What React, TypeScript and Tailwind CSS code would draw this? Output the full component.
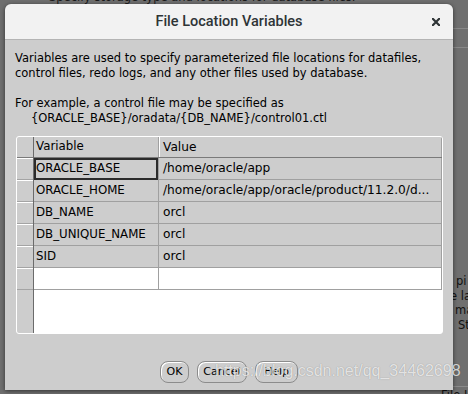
import React from "react";

const rows: [string, string][] = [
  ["ORACLE_BASE", "/home/oracle/app"],
  ["ORACLE_HOME", "/home/oracle/app/oracle/product/11.2.0/d..."],
  ["DB_NAME", "orcl"],
  ["DB_UNIQUE_NAME", "orcl"],
  ["SID", "orcl"],
];

export default function App() {
  return (
    <div className="relative w-[468px] h-[394px] overflow-hidden bg-[#6f6f6f] font-['DejaVu_Sans',sans-serif] text-[11.5px] text-black">
      {/* background window content */}
      <div className="absolute left-[49px] top-[-10px] leading-[15px] whitespace-nowrap text-[#1a1a1a]">
        Specify storage type and locations for database files.
      </div>
      <div className="absolute left-[453px] top-[28px] w-[15px] h-px bg-[#888]" />
      <div className="absolute left-[453px] top-[47px] w-[15px] h-px bg-[#888]" />
      <div className="absolute left-[456px] top-[274px] leading-[15px] whitespace-nowrap text-[#111]">pi</div>
      <div className="absolute left-[450px] top-[289px] leading-[15px] whitespace-nowrap text-[#111]">e la</div>
      <div className="absolute left-[455px] top-[303px] leading-[15px] whitespace-nowrap text-[#111]">ma</div>
      <div className="absolute left-[458px] top-[318px] leading-[15px] whitespace-nowrap text-[#111]">St</div>
      <div className="absolute left-[430px] top-[386px] w-[38px] h-px bg-[#8a8a8a]" />
      <div className="absolute left-[441px] top-[388px] leading-[15px] whitespace-nowrap text-[#111]">File L</div>

      {/* dialog */}
      <div className="absolute left-[5px] top-[4px] w-[448px] h-[386px] rounded-t-[6px] overflow-hidden flex flex-col shadow-[0_1px_4px_rgba(0,0,0,0.55)]">
        <div className="relative h-[36px] shrink-0 bg-[#f2f2f2] border-b border-[#b4b4b4] flex items-center justify-center">
          <span className="font-['Roboto',sans-serif] font-medium text-[14.5px] text-[#2e3436]">
            File Location Variables
          </span>
          <svg className="absolute left-[427px] top-[14px]" width="8" height="8" viewBox="0 0 8 8">
            <path d="M0.8 0.8 L7.2 7.2 M7.2 0.8 L0.8 7.2" stroke="#2e3436" strokeWidth="2.2" strokeLinecap="square" />
          </svg>
        </div>

        <div className="flex-1 bg-[#cdcdcd] pt-[11px] px-[10px] flex flex-col">
          <div className="leading-[15px] whitespace-nowrap">
            <div>Variables are used to specify parameterized file locations for datafiles,</div>
            <div>control files, redo logs, and any other files used by database.</div>
            <div className="h-[15px]" />
            <div>For example, a control file may be specified as</div>
            <div className="pl-[16px]">{"{ORACLE_BASE}/oradata/{DB_NAME}/control01.ctl"}</div>
          </div>

          {/* table */}
          <div className="ml-[1px] mt-[10px] w-[427px] h-[198px] shrink-0 border border-white rounded-[3px] bg-white flex overflow-hidden">
            <div className="w-[17px] shrink-0 bg-[#cdcdcd] border-r border-[#6b6b6b] flex flex-col">
              <div className="h-[21px] border-b border-[#7a7a7a]" />
              {[0, 1, 2, 3, 4, 5].map((i) => (
                <div key={i} className="h-[22px] border-t border-white border-b border-b-[#a4a4a4]" />
              ))}
            </div>
            <div className="flex-1 flex flex-col">
              <div className="h-[21px] shrink-0 flex bg-[#cdcdcd] border-b border-[#7a7a7a]">
                <div className="w-[125px] shrink-0 border-r border-[#a0a0a0] pl-[2px] flex items-center text-[11.8px]">Variable</div>
                <div className="flex-1 border-l border-white border-r border-r-[#a0a0a0] pl-[3px] flex items-center text-[12.2px]">Value</div>
              </div>
              {rows.map(([k, v], i) => (
                <div key={k} className="h-[22px] shrink-0 flex bg-[#cdcdcd] border-b border-[#a0a0a0]">
                  <div className="relative w-[125px] shrink-0 border-r border-[#a0a0a0] pl-[2px] flex items-center whitespace-nowrap text-[11.8px]">
                    {k}
                    {i === 0 && <div className="absolute left-0 top-0 right-0 bottom-[-1px] border-2 border-[#2b2b2b]" />}
                  </div>
                  <div className="flex-1 border-r border-[#a0a0a0] pl-[4px] flex items-center whitespace-nowrap overflow-hidden text-[12.2px]">{v}</div>
                </div>
              ))}
              <div className="h-[22px] shrink-0 flex bg-white border-b border-[#a0a0a0]">
                <div className="w-[125px] shrink-0 border-r border-[#a0a0a0]" />
                <div className="flex-1 border-r border-[#a0a0a0]" />
              </div>
              <div className="flex-1 bg-white" />
            </div>
          </div>

          {/* buttons */}
          <div className="mt-[27px] flex justify-center gap-[8px] text-[11px]">
            <button className="w-[29px] h-[22px] rounded-[8px] border border-[#8c8c8c] bg-[#cdcdcd] shadow-[inset_1px_1px_0_#fff] flex items-center justify-center">OK</button>
            <button className="w-[50px] h-[22px] rounded-[8px] border border-[#8c8c8c] bg-[#cdcdcd] shadow-[inset_1px_1px_0_#fff] flex items-center justify-center">Cancel</button>
            <button className="w-[43px] h-[22px] rounded-[8px] border border-[#8c8c8c] bg-[#cdcdcd] shadow-[inset_1px_1px_0_#fff] flex items-center justify-center">Help</button>
          </div>
        </div>
      </div>

      {/* watermark */}
      <div className="absolute left-[215px] top-[363px] leading-[16px] text-[16px] font-['Liberation_Sans',Arial,sans-serif] whitespace-nowrap text-white/75 [text-shadow:0_0_1px_rgba(0,0,0,0.35)]">
        https://blog.csdn.net/qq_34462698
      </div>
    </div>
  );
}
